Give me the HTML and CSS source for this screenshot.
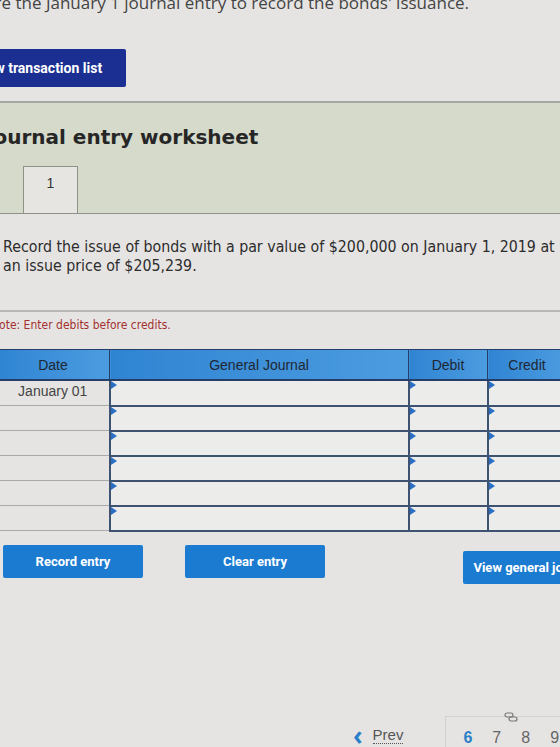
FILE: index.html
```html
<!DOCTYPE html>
<html lang="en">
<head>
    <meta charset="UTF-8">
    <meta name="viewport" content="width=device-width, initial-scale=1.0">
    <title>Journal entry worksheet</title>
    <link rel="stylesheet" href="styles.css">
</head>
<body>
<div class="page">
    <p class="question">Prepare the January 1 journal entry to record the bonds' issuance.</p>

    <div class="top-actions">
        <button class="btn-dark">View transaction list</button>
    </div>

    <section class="worksheet">
        <div class="worksheet-head">
            <h2>Journal entry worksheet</h2>
            <div class="tabs">
                <span class="tab">1</span>
            </div>
        </div>

        <div class="worksheet-body">
            <p class="task">Record the issue of bonds with a par value of $200,000 on January 1, 2019 at an issue price of $205,239.</p>

            <p class="note">Note: Enter debits before credits.</p>

            <table class="journal">
                <thead>
                    <tr>
                        <th class="col-date">Date</th>
                        <th class="col-account">General Journal</th>
                        <th class="col-amount">Debit</th>
                        <th class="col-amount">Credit</th>
                    </tr>
                </thead>
                <tbody>
                    <tr>
                        <td class="date">January 01</td>
                        <td class="input"></td>
                        <td class="input"></td>
                        <td class="input"></td>
                    </tr>
                    <tr><td class="date"></td><td class="input"></td><td class="input"></td><td class="input"></td></tr>
                    <tr><td class="date"></td><td class="input"></td><td class="input"></td><td class="input"></td></tr>
                    <tr><td class="date"></td><td class="input"></td><td class="input"></td><td class="input"></td></tr>
                    <tr><td class="date"></td><td class="input"></td><td class="input"></td><td class="input"></td></tr>
                    <tr><td class="date"></td><td class="input"></td><td class="input"></td><td class="input"></td></tr>
                </tbody>
            </table>

            <div class="entry-actions">
                <button class="btn">Record entry</button>
                <button class="btn">Clear entry</button>
                <button class="btn btn-right">View general journal</button>
            </div>
        </div>
    </section>

    <nav class="pager">
        <a class="prev" href="#"><span class="chev">&#8249;</span> <span class="prev-label">Prev</span></a>
        <div class="pages">
            <svg class="link-icon" width="14" height="10" viewBox="0 0 14 10">
                <rect x="1" y="1" width="8" height="4" rx="2" fill="none" stroke="#777" stroke-width="1.2"/>
                <rect x="5" y="5" width="8" height="4" rx="2" fill="none" stroke="#777" stroke-width="1.2"/>
            </svg>
            <span class="num current">6</span>
            <span class="num">7</span>
            <span class="num">8</span>
            <span class="num">9</span>
        </div>
    </nav>
</div>
</body>
</html>
```

FILE: styles.css
```css
body {
    margin: 0;
    padding: 0;
    background-color: #e6e4e3;
    font-family: "Open Sans", Arial, sans-serif;
    overflow: hidden;
}

.page {
    margin-left: -50px;
    width: 660px;
}

.question {
    margin: -8px 0 0 -2px;
    font-size: 17px;
    line-height: 22px;
    color: #444;
}

.top-actions {
    padding: 35px 0 14px 10px;
    border-bottom: 2px solid #a5a7a2;
}

.btn-dark {
    height: 38px;
    padding: 0 24px 0 14px;
    border: none;
    border-radius: 2px;
    background-color: #1b2f92;
    color: white;
    font-family: Roboto, Arial, sans-serif;
    font-weight: bold;
    font-size: 14px;
}

/* worksheet */
.worksheet-head {
    background-color: #d5dacb;
    padding-top: 22px;
}

.worksheet-head h2 {
    margin: 0 0 17px 36px;
    font-family: "DejaVu Sans", Verdana, sans-serif;
    font-size: 20px;
    color: #262626;
}

.tabs {
    padding-left: 73px;
    border-bottom: 1px solid #8f928a;
    height: 47px;
}

.tab {
    display: inline-block;
    width: 55px;
    height: 47px;
    box-sizing: border-box;
    padding-top: 8px;
    border: 1px solid #8f928a;
    border-bottom: none;
    background-color: #e6e5e2;
    text-align: center;
    font-family: Arial, sans-serif;
    font-size: 14px;
    color: #333;
}

.worksheet-body {
    background-color: #e6e4e3;
    padding-top: 23px;
}

.task {
    margin: 0 0 35px 53px;
    width: 558px;
    font-family: "DejaVu Sans Condensed", "DejaVu Sans", sans-serif;
    font-size: 15.8px;
    line-height: 19px;
    color: #2c2c2c;
}

.note {
    margin: 0;
    padding: 6px 0 0 41px;
    border-top: 2px solid #b9b8b6;
    height: 31px;
    font-family: "DejaVu Sans Condensed", "DejaVu Sans", sans-serif;
    font-size: 12px;
    color: #a3322e;
}

/* journal grid */
.journal {
    margin-left: 46px;
    border-collapse: collapse;
    font-family: Arial, sans-serif;
    font-size: 14px;
}

.journal th {
    height: 29px;
    padding: 0;
    background: linear-gradient(to right, #2f84d2, #4c9ce0);
    border: 1px solid #243e69;
    border-bottom-width: 2px;
    color: #1f2733;
    font-weight: normal;
}

.col-date { width: 112px; }
.col-account { width: 298px; }
.col-amount { width: 78px; }

.journal td {
    height: 22px;
    padding: 0;
}

.journal td.date {
    border-bottom: 1px solid #a9a9a9;
    border-left: 1px solid #a9a9a9;
    text-align: center;
    color: #444;
    vertical-align: top;
    padding-top: 2px;
}

.journal td.input {
    position: relative;
    border: 2px solid #3e5272;
    background-color: #ececea;
}

/* small marker in the corner of each input cell */
.journal td.input::before {
    content: "";
    position: absolute;
    left: 0;
    top: 0;
    border-top: 4px solid transparent;
    border-bottom: 4px solid transparent;
    border-left: 6px solid #2a6fc4;
}

.entry-actions {
    display: flex;
    align-items: flex-start;
    gap: 42px;
    padding: 13px 0 0 53px;
    height: 144px;
}

.btn {
    width: 140px;
    height: 33px;
    border: none;
    border-radius: 2px;
    background-color: #1a7bd0;
    color: white;
    font-family: Roboto, Arial, sans-serif;
    font-weight: bold;
    font-size: 13px;
}

.btn-right {
    margin-left: 96px;
    margin-top: 6px;
}

/* pagination */
.pager {
    display: flex;
    align-items: flex-end;
    padding-left: 403px;
    height: 60px;
}

.prev {
    display: flex;
    align-items: center;
    gap: 10px;
    text-decoration: none;
    padding-bottom: 4px;
}

.chev {
    color: #2a7fc8;
    font-size: 26px;
    font-weight: bold;
    line-height: 20px;
}

.prev-label {
    color: #555;
    font-family: Arial, sans-serif;
    font-size: 15px;
    border-bottom: 1px dotted #555;
}

.pages {
    position: relative;
    display: flex;
    gap: 20px;
    margin-left: 42px;
    padding: 12px 20px 2px 17px;
    border-top: 1px solid #d3d2ce;
    border-left: 1px solid #d3d2ce;
    font-family: Arial, sans-serif;
    font-size: 16px;
    color: #666;
}

.num.current {
    color: #2a7fc8;
    font-weight: bold;
}

.link-icon {
    position: absolute;
    top: -5px;
    left: 58px;
}
```
